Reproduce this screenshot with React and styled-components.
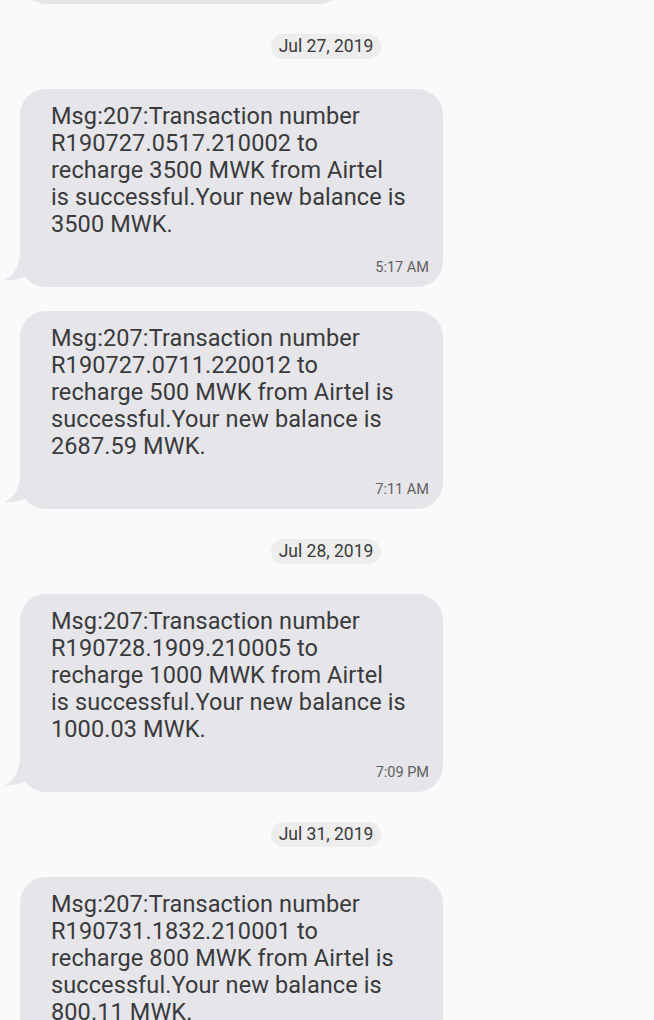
import React from "react";
import styled, { createGlobalStyle } from "styled-components";

const Global = createGlobalStyle`
  html, body { margin: 0; padding: 0; background: #fafafa; }
  body { font-family: Roboto, "Noto Sans", "Liberation Sans", sans-serif; }
  #root { overflow: hidden; height: 1020px; }
`;

const Thread = styled.div`
  display: flex;
  flex-direction: column;
  padding: 0 0 0 20px;
  background: #fafafa;
  min-height: 1020px;
`;

const Stub = styled.div`
  width: 325px;
  height: 60px;
  margin-top: -56px;
  background: #e5e5ea;
  border-radius: 26px;
`;

const DateRow = styled.div`
  display: flex;
  justify-content: center;
  margin: 30px 0 30px -22px;
`;

const DatePill = styled.div`
  height: 25px;
  padding: 0 8px;
  border-radius: 13px;
  background: #ededed;
  color: #3a3a3a;
  font-size: 17.5px;
  line-height: 25px;
`;

const Bubble = styled.div`
  position: relative;
  width: 423px;
  box-sizing: border-box;
  padding: 14px 14px 9px 31px;
  background: #e5e5ea;
  border-radius: 26px;
  margin-bottom: ${(p) => (p.$last ? "0" : "24px")};
`;

const Body = styled.div`
  color: #3a3a3c;
  font-size: 23.5px;
  line-height: 27px;
  letter-spacing: 0.1px;
`;

const Line = styled.div`
  white-space: nowrap;
`;

const Time = styled.div`
  margin-top: 20px;
  text-align: right;
  color: #5f5f5f;
  font-size: 14.5px;
  line-height: 20px;
`;

const Tail = styled.svg`
  position: absolute;
  left: -16px;
  bottom: 4px;
`;

const TailShape = () => (
  <Tail width="26" height="32" viewBox="0 0 26 32">
    <path d="M16 0 C16 14 11 24 1 29 Q11 30 22 26 L26 0 Z" fill="#e5e5ea" />
  </Tail>
);

const data = [
  {
    date: "Jul 27, 2019",
    msgs: [
      {
        lines: [
          "Msg:207:Transaction number",
          "R190727.0517.210002 to",
          "recharge 3500 MWK from Airtel",
          "is successful.Your new balance is",
          "3500 MWK.",
        ],
        time: "5:17 AM",
      },
      {
        lines: [
          "Msg:207:Transaction number",
          "R190727.0711.220012 to",
          "recharge 500 MWK from Airtel is",
          "successful.Your new balance is",
          "2687.59 MWK.",
        ],
        time: "7:11 AM",
      },
    ],
  },
  {
    date: "Jul 28, 2019",
    msgs: [
      {
        lines: [
          "Msg:207:Transaction number",
          "R190728.1909.210005 to",
          "recharge 1000 MWK from Airtel",
          "is successful.Your new balance is",
          "1000.03 MWK.",
        ],
        time: "7:09 PM",
      },
    ],
  },
  {
    date: "Jul 31, 2019",
    msgs: [
      {
        lines: [
          "Msg:207:Transaction number",
          "R190731.1832.210001 to",
          "recharge 800 MWK from Airtel is",
          "successful.Your new balance is",
          "800.11 MWK.",
        ],
        time: "6:32 PM",
      },
    ],
  },
];

export default function App() {
  return (
    <>
      <Global />
      <Thread>
        <Stub />
        {data.map((g) => (
          <React.Fragment key={g.date}>
            <DateRow>
              <DatePill>{g.date}</DatePill>
            </DateRow>
            {g.msgs.map((m, i) => (
              <Bubble key={m.time} $last={i === g.msgs.length - 1}>
                <Body>
                  {m.lines.map((l) => (
                    <Line key={l}>{l}</Line>
                  ))}
                </Body>
                <Time>{m.time}</Time>
                <TailShape />
              </Bubble>
            ))}
          </React.Fragment>
        ))}
      </Thread>
    </>
  );
}
